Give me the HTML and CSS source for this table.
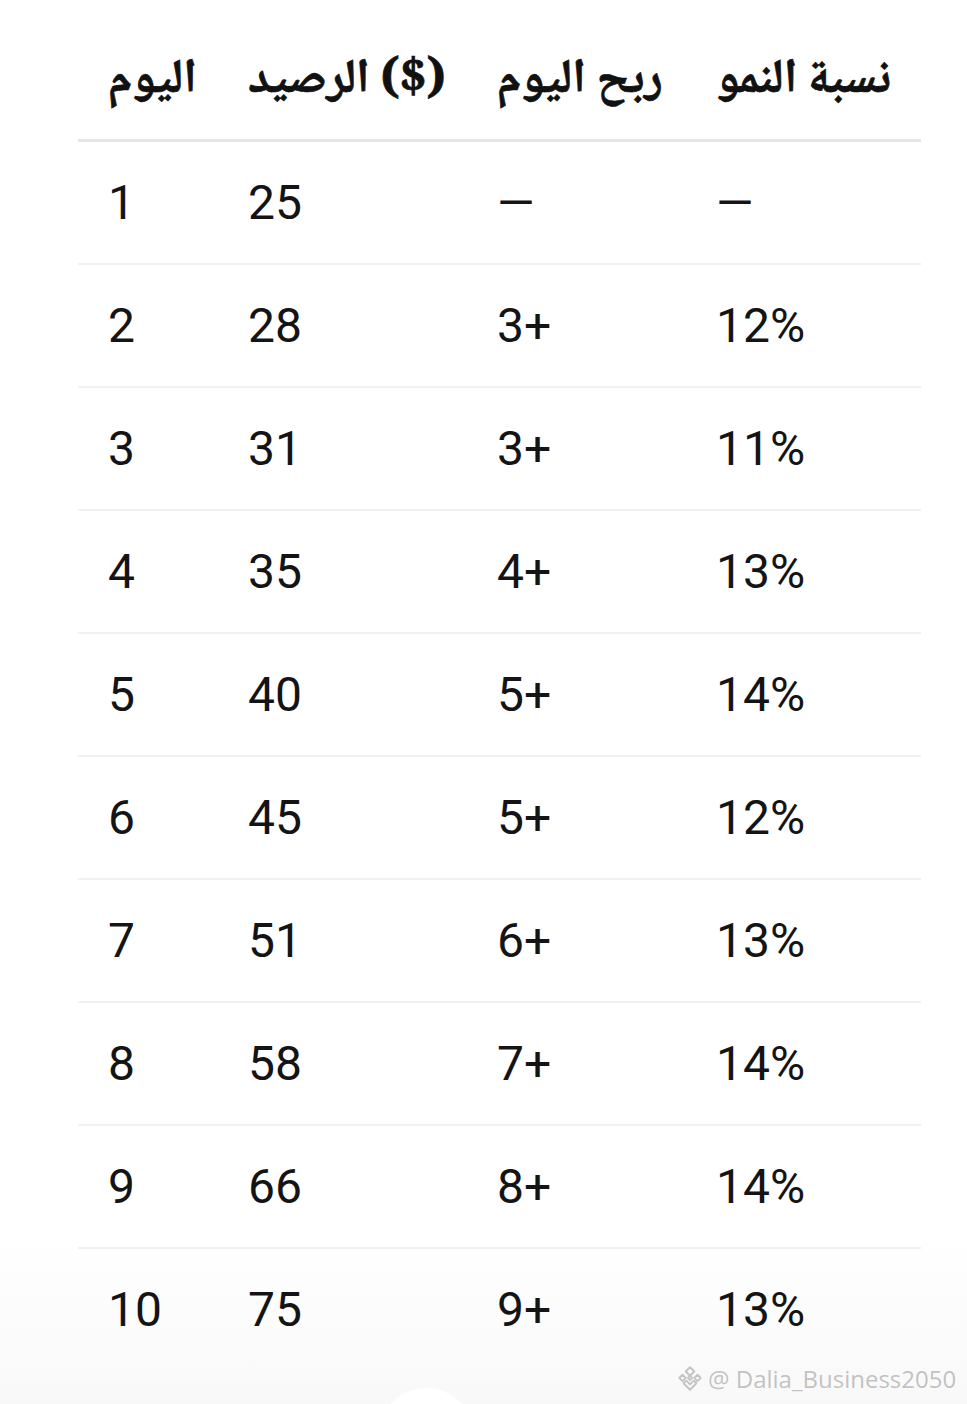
FILE: index.html
```html
<!DOCTYPE html>
<html lang="ar">
<head>
<meta charset="utf-8">
<title>جدول النمو</title>
<link rel="stylesheet" href="styles.css">
</head>
<body>
<div class="page">
  <div class="fade"></div>
  <div class="bubble"></div>
  <div class="table">
    <div class="row head">
      <div class="cell">اليوم</div>
      <div class="cell">الرصيد ($)</div>
      <div class="cell">ربح اليوم</div>
      <div class="cell">نسبة النمو</div>
    </div>
    <div class="row"><div class="cell">1</div><div class="cell">25</div><div class="cell">—</div><div class="cell">—</div></div>
    <div class="row"><div class="cell">2</div><div class="cell">28</div><div class="cell">3+</div><div class="cell">12%</div></div>
    <div class="row"><div class="cell">3</div><div class="cell">31</div><div class="cell">3+</div><div class="cell">11%</div></div>
    <div class="row"><div class="cell">4</div><div class="cell">35</div><div class="cell">4+</div><div class="cell">13%</div></div>
    <div class="row"><div class="cell">5</div><div class="cell">40</div><div class="cell">5+</div><div class="cell">14%</div></div>
    <div class="row"><div class="cell">6</div><div class="cell">45</div><div class="cell">5+</div><div class="cell">12%</div></div>
    <div class="row"><div class="cell">7</div><div class="cell">51</div><div class="cell">6+</div><div class="cell">13%</div></div>
    <div class="row"><div class="cell">8</div><div class="cell">58</div><div class="cell">7+</div><div class="cell">14%</div></div>
    <div class="row"><div class="cell">9</div><div class="cell">66</div><div class="cell">8+</div><div class="cell">14%</div></div>
    <div class="row last"><div class="cell">10</div><div class="cell">75</div><div class="cell">9+</div><div class="cell">13%</div></div>
  </div>
  <div class="watermark">
    <svg class="logo" viewBox="0 0 28 28" width="30" height="30">
      <g fill="none" stroke="#c4c4c4" stroke-width="1.8" stroke-linejoin="round">
        <path d="M14 3 L18 7 L14 11 L10 7 Z"/>
        <path d="M7 10 L10 13 L7 16 L4 13 Z"/>
        <path d="M21 10 L24 13 L21 16 L18 13 Z"/>
        <path d="M14 11 L16 13 L14 15 L12 13 Z"/>
        <path d="M8 18 L14 24 L20 18 L17.5 15.5 L14 19 L10.5 15.5 Z"/>
      </g>
    </svg>
    <span>@ Dalia_Business2050</span>
  </div>
</div>
</body>
</html>
```
FILE: styles.css
```css
html, body {
  margin: 0;
  padding: 0;
  background: #ffffff;
}
.page {
  position: relative;
  width: 967px;
  height: 1404px;
  overflow: hidden;
  background: #ffffff;
}
.table {
  position: relative;
  margin-left: 78px;
  width: 843px;
  padding-top: 15px;
}
.row {
  display: grid;
  grid-template-columns: 140px 249px 219px 235px;
  height: 121px;
  align-items: center;
  border-bottom: 2px solid #f1f1f1;
  font-family: Roboto, "Liberation Sans", sans-serif;
  font-size: 48px;
  color: #141414;
}
.row.head {
  height: 124px;
  border-bottom: 3px solid #e6e6e6;
  font-family: "Noto Naskh Arabic", "Noto Sans Arabic", "Amiri", "DejaVu Sans", sans-serif;
  font-weight: 700;
  font-size: 48px;
  color: #111;
  -webkit-text-stroke: 0.7px #111;
}
.row.last {
  border-bottom: none;
}
.cell {
  padding-left: 30px;
  white-space: nowrap;
  line-height: 1;
}
.head .cell {
  padding-top: 10px;
}
.fade {
  position: absolute;
  left: 0;
  right: 0;
  bottom: 0;
  height: 170px;
  background: linear-gradient(to bottom, rgba(248,248,248,0) 0%, rgba(249,249,249,0.6) 60%, rgba(247,247,247,0.85) 100%);
}
.bubble {
  position: absolute;
  left: 378px;
  top: 1388px;
  width: 96px;
  height: 96px;
  border-radius: 50%;
  background: #ffffff;
}
.watermark {
  position: absolute;
  left: 675px;
  top: 1362px;
  display: flex;
  align-items: center;
  gap: 3px;
  font-family: "Open Sans", "DejaVu Sans", sans-serif;
  font-size: 24px;
  color: #c2c2c2;
  text-shadow: 0 0 1px #fff, 0 0 2px #fff;
  white-space: nowrap;
}
.logo {
  display: block;
}
```
